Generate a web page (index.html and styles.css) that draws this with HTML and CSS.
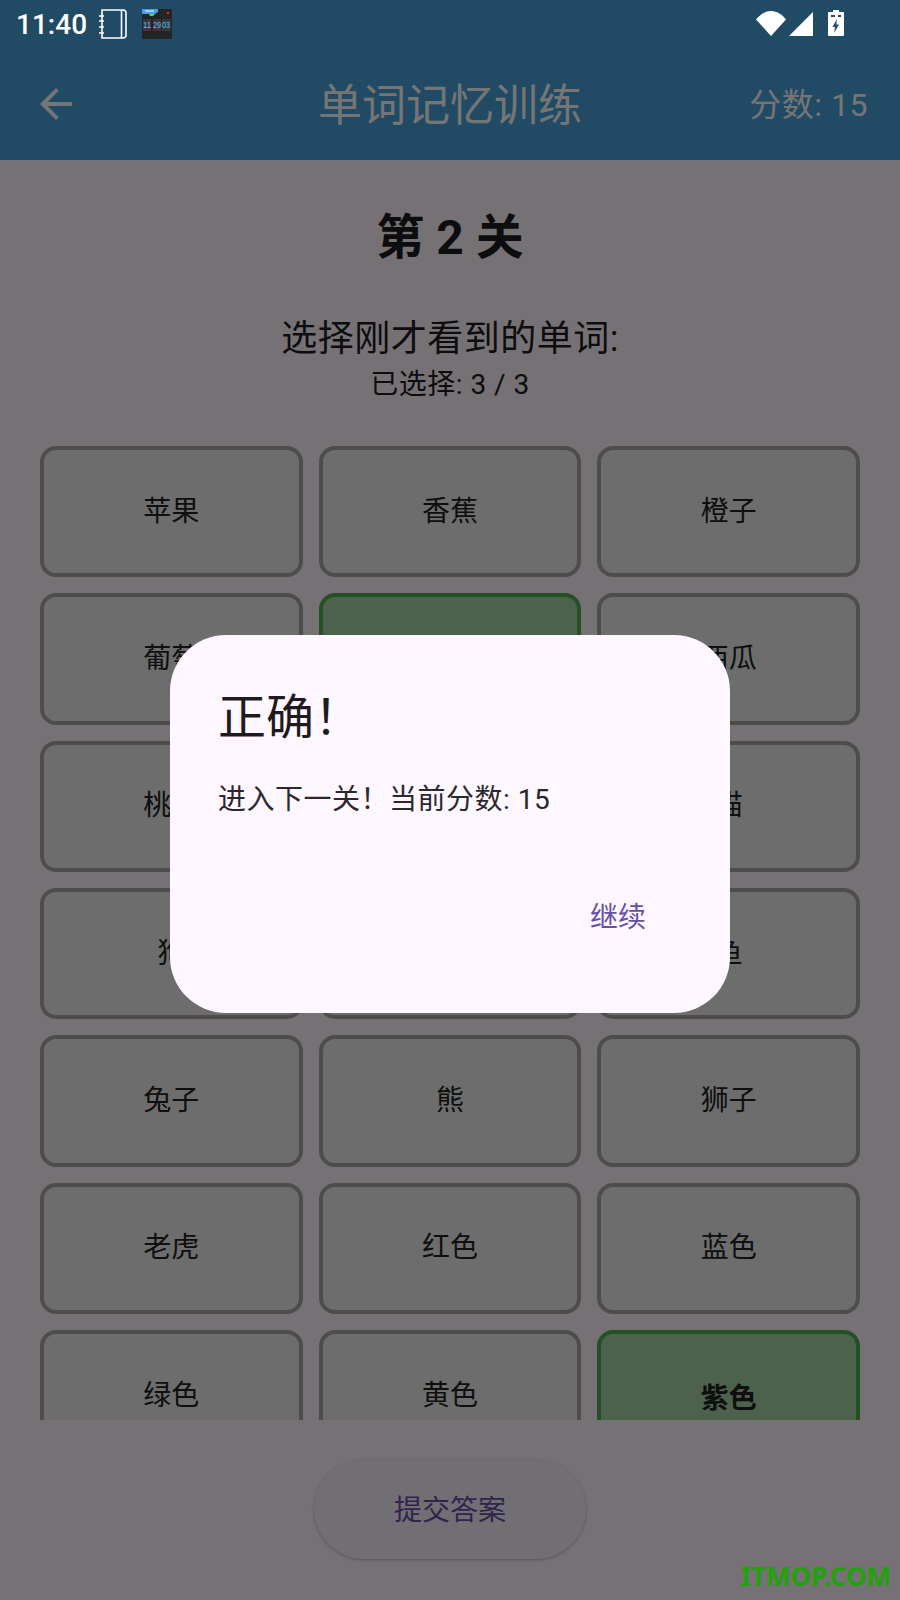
FILE: index.html

```html
<!DOCTYPE html>
<html lang="zh-CN">
<head>
  <meta charset="UTF-8">
  <meta name="viewport" content="width=device-width, initial-scale=1">
  <title>单词记忆训练</title>
  <link rel="stylesheet" href="styles.css">
</head>
<body>
  <div class="status">
    <span class="time">11:40</span>
    <svg class="ic-notes" width="28" height="30" viewBox="0 0 28 30" fill="none" stroke="#fff" stroke-width="1.6">
      <path d="M3 1h21a3 3 0 0 1 3 3v22a3 3 0 0 1-3 3H3z"/>
      <path d="M22.500 1v28"/>
      <path d="M0 7h5M0 12h5M0 18h5M0 24h5"/>
    </svg>
    <svg class="ic-clock" width="30" height="30" viewBox="0 0 30 30">
      <rect width="30" height="30" fill="#232425"/>
      <path d="M0 0h16v3l-3 2H0z" fill="#4a9be8"/>
      <path d="M3 2h9" stroke="#fff" stroke-width="1"/>
      <path d="M7 5h6l-2 2H8z" fill="#5fd35f"/>
      <rect x="25" y="3" width="2" height="2" fill="#e0352b"/>
      <rect x="1" y="10" width="8" height="12" fill="#34383c"/>
      <rect x="11" y="10" width="8" height="12" fill="#34383c"/>
      <rect x="20" y="10" width="9" height="12" fill="#34383c"/>
      <text class="clock-digits" x="1" y="19" textLength="8" lengthAdjust="spacingAndGlyphs">11</text>
      <text class="clock-digits" x="11" y="19" textLength="8" lengthAdjust="spacingAndGlyphs">29</text>
      <text class="clock-digits" x="20" y="19" textLength="8" lengthAdjust="spacingAndGlyphs">03</text>
    </svg>
    <span class="status-right">
      <svg width="30" height="25" viewBox="0 0 30 25"><path d="M0 8.500C4 3.500 9 0 15 0s11 3.500 15 8.500L15 25z" fill="#fff"/></svg>
      <svg width="24" height="24" viewBox="0 0 24 24"><path d="M24 0v24H0z" fill="#fff"/></svg>
      <svg class="ic-battery" width="16" height="26" viewBox="0 0 16 26">
        <path d="M5 0h6v2h4a1 1 0 0 1 1 1v22a1 1 0 0 1-1 1H1a1 1 0 0 1-1-1V3a1 1 0 0 1 1-1h4z" fill="#fff"/>
        <path d="M9 9l-4.500 8H7l-1 6 5-8.500H8.300z" fill="#214a64"/>
        <path d="M3 5h4v2H3zM10 5h3v2h-3z" fill="#214a64"/>
      </svg>
    </span>
  </div>

  <header class="appbar">
    <svg class="back" width="48" height="48" viewBox="0 0 24 24"><path d="M20 11H7.830l5.590-5.590L12 4l-8 8 8 8 1.410-1.410L7.830 13H20v-2z" fill="#fff"/></svg>
    <div class="appbar-title">单词记忆训练</div>
    <div class="score">分数: 15</div>
  </header>

  <main class="game">
    <h1 class="level">第 2 关</h1>
    <p class="hint">选择刚才看到的单词:</p>
    <p class="count">已选择: 3 / 3</p>
    <div class="words">
      <div class="word">苹果</div>
      <div class="word">香蕉</div>
      <div class="word">橙子</div>
      <div class="word">葡萄</div>
      <div class="word picked"></div>
      <div class="word">西瓜</div>
      <div class="word">桃子</div>
      <div class="word"></div>
      <div class="word">猫</div>
      <div class="word">狗</div>
      <div class="word"></div>
      <div class="word">鱼</div>
      <div class="word">兔子</div>
      <div class="word">熊</div>
      <div class="word">狮子</div>
      <div class="word">老虎</div>
      <div class="word">红色</div>
      <div class="word">蓝色</div>
      <div class="word">绿色</div>
      <div class="word">黄色</div>
      <div class="word picked">紫色</div>
    </div>
  </main>

  <footer class="bottom">
    <button class="submit">提交答案</button>
  </footer>

  <div class="scrim">
    <div class="dialog">
      <h2 class="dialog-title">正确！</h2>
      <p class="dialog-text">进入下一关！当前分数: 15</p>
      <div class="dialog-actions">继续</div>
    </div>
  </div>

  <div class="watermark">ITMOP.COM</div>
</body>
</html>
```

FILE: styles.css

```css
* {
  box-sizing: border-box;
}
body {
  position: relative;
  display: flex;
  flex-direction: column;
  width: 900px;
  height: 1600px;
  margin: 0;
  overflow: hidden;
  font-family: Roboto, "Noto Sans CJK SC", sans-serif;
  background: #fef7ff;
  color: #1d1b20;
}
p, h1, h2 {
  margin: 0;
  font-weight: normal;
}

.status {
  position: relative;
  z-index: 2;
  display: flex;
  align-items: center;
  height: 48px;
  padding-left: 16px;
  background: #214a64;
  color: #fff;
}
.time {
  width: 83px;
  font-size: 28px;
  font-weight: 500;
}
.ic-notes {
  margin-right: 15px;
}
.clock-digits {
  font-family: "Liberation Sans", sans-serif;
  font-size: 9px;
  fill: #57c3f0;
}
.status-right {
  display: flex;
  align-items: flex-end;
  gap: 3px;
  margin-left: auto;
  margin-right: 56px;
  margin-bottom: 2px;
}
.ic-battery {
  margin-left: 12px;
}

.appbar {
  display: grid;
  grid-template-columns: 1fr auto 1fr;
  align-items: center;
  height: 112px;
  padding: 0 32px;
  background: #48a1da;
  color: #fff;
}
.back {
  display: block;
}
.appbar-title {
  padding-bottom: 4px;
  font-size: 44px;
}
.score {
  justify-self: end;
  padding-bottom: 4px;
  font-size: 32px;
  letter-spacing: 0.5px;
}

.game {
  flex: 1;
  min-height: 0;
  overflow: hidden;
  padding: 41px 40px 0;
  text-align: center;
}
.level {
  font-size: 48px;
  font-weight: bold;
  line-height: 74px;
}
.hint {
  margin-top: 40px;
  font-size: 36px;
  line-height: 48px;
  letter-spacing: 0.5px;
}
.count {
  margin-top: 2px;
  font-size: 28px;
  line-height: 40px;
  letter-spacing: 0.5px;
}
.words {
  display: grid;
  grid-template-columns: repeat(3, 1fr);
  gap: 16px;
  margin-top: 41px;
}
.word {
  display: flex;
  align-items: center;
  justify-content: center;
  aspect-ratio: 2 / 1;
  padding-bottom: 6px;
  border: 4px solid #a8a8a8;
  border-radius: 16px;
  background: #eee;
  font-size: 28px;
  color: #222;
}
.word.picked {
  padding-bottom: 0;
  border-color: #4caf50;
  background: #a5d6a7;
  font-weight: bold;
}

.bottom {
  display: flex;
  justify-content: center;
  height: 180px;
  padding-top: 39px;
}
.submit {
  width: 272px;
  height: 100px;
  padding-bottom: 4px;
  border: none;
  border-radius: 50px;
  background: #f7f2fa;
  box-shadow: 0 1px 3px rgba(0,0,0,0.25);
  font-family: inherit;
  font-size: 28px;
  color: #6750a4;
}

.scrim {
  position: absolute;
  inset: 0;
  z-index: 1;
  display: flex;
  justify-content: center;
  align-items: flex-start;
  padding-top: 635px;
  background: rgba(0,0,0,0.54);
}
.dialog {
  width: 560px;
  height: 378px;
  padding: 51px 84px 0 48px;
  border-radius: 56px;
  background: #fef7ff;
}
.dialog-title {
  font-size: 48px;
  line-height: 64px;
}
.dialog-text {
  margin-top: 30px;
  font-size: 28px;
  line-height: 40px;
  letter-spacing: 0.5px;
  color: #2a282d;
}
.dialog-actions {
  margin-top: 78px;
  font-size: 28px;
  line-height: 40px;
  text-align: right;
  color: #6750a4;
}

.watermark {
  position: absolute;
  right: 9px;
  bottom: 6px;
  z-index: 3;
  font-family: "Noto Sans", sans-serif;
  font-size: 26px;
  font-weight: bold;
  color: #22a20a;
}
```
